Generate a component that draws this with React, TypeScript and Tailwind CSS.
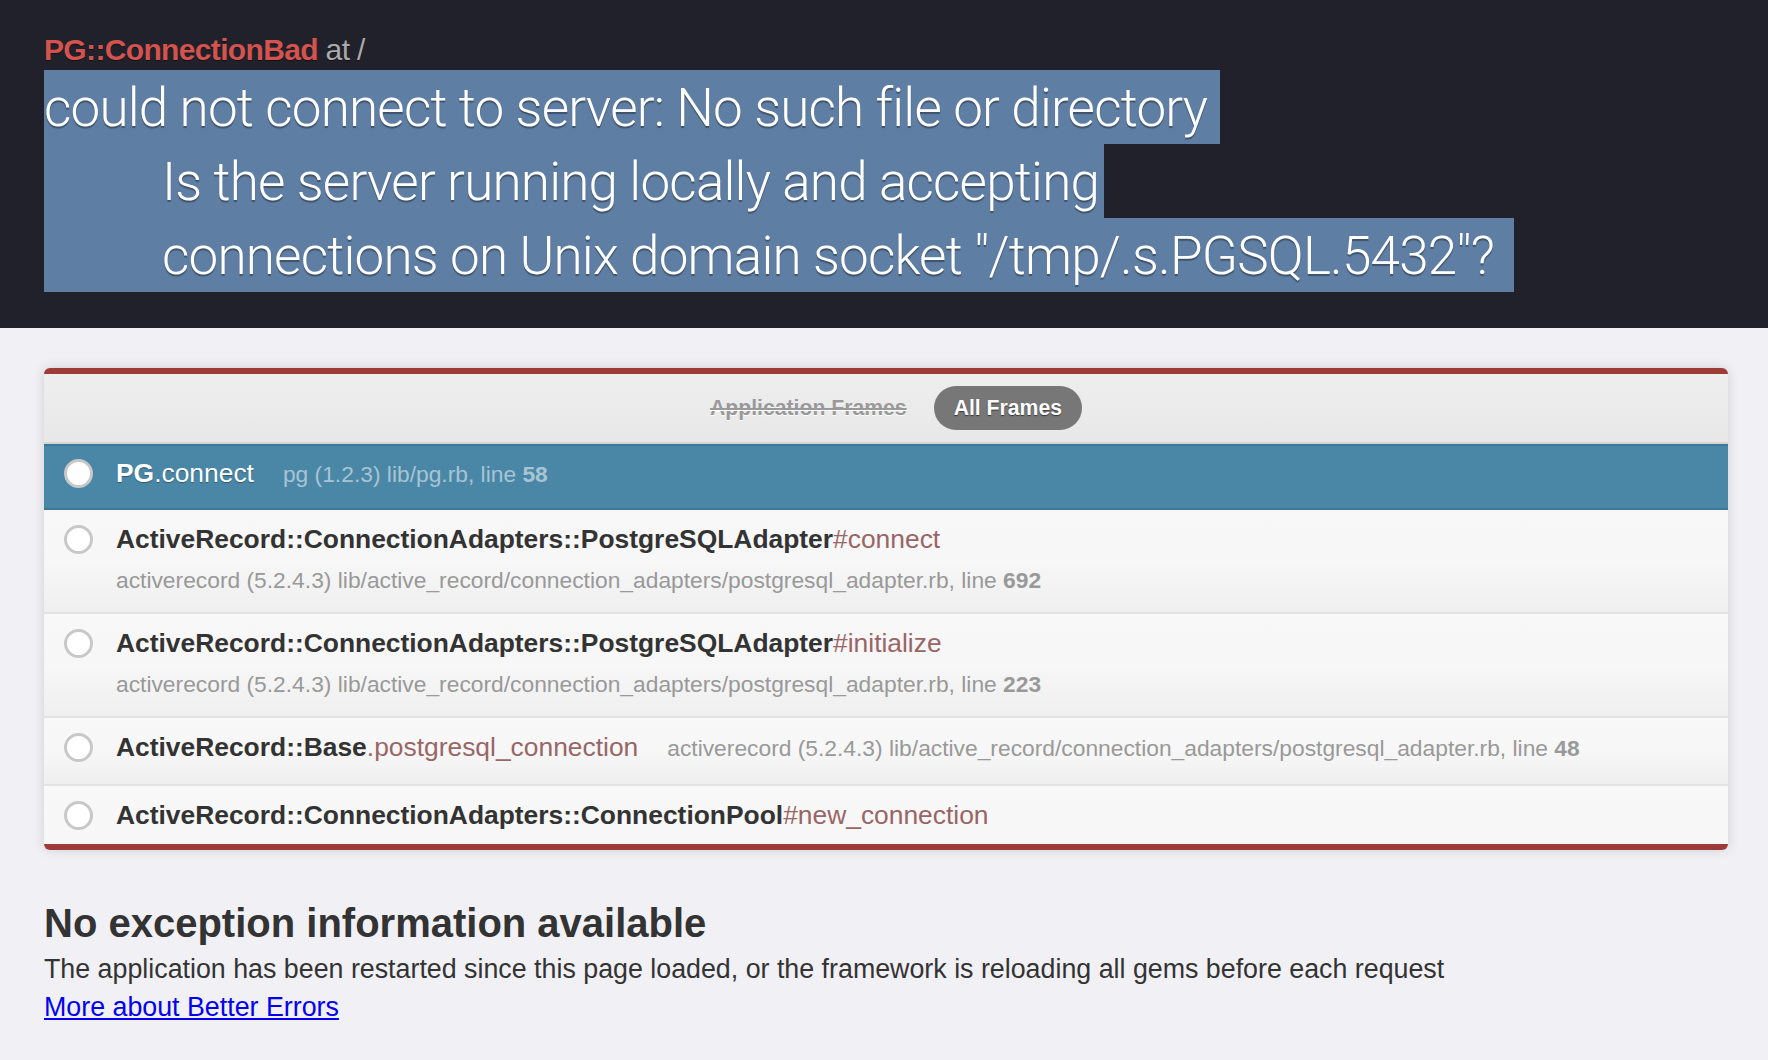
import React from "react";

// ─── Data ─────────────────────────────────────────────────

type Frame = {
  cls: string;
  method: string;
  gem: string;
  path: string;
  line: number;
  inline?: boolean;
  selected?: boolean;
  clipped?: boolean;
  height: string;
};

const frames: Frame[] = [
  {
    cls: "PG",
    method: ".connect",
    gem: "pg (1.2.3)",
    path: "lib/pg.rb",
    line: 58,
    inline: true,
    selected: true,
    height: "h-[66px]",
  },
  {
    cls: "ActiveRecord::ConnectionAdapters::PostgreSQLAdapter",
    method: "#connect",
    gem: "activerecord (5.2.4.3)",
    path: "lib/active_record/connection_adapters/postgresql_adapter.rb",
    line: 692,
    height: "h-[104px]",
  },
  {
    cls: "ActiveRecord::ConnectionAdapters::PostgreSQLAdapter",
    method: "#initialize",
    gem: "activerecord (5.2.4.3)",
    path: "lib/active_record/connection_adapters/postgresql_adapter.rb",
    line: 223,
    height: "h-[104px]",
  },
  {
    cls: "ActiveRecord::Base",
    method: ".postgresql_connection",
    gem: "activerecord (5.2.4.3)",
    path: "lib/active_record/connection_adapters/postgresql_adapter.rb",
    line: 48,
    inline: true,
    height: "h-[68px]",
  },
  {
    // list is scrolled here, the location line sits below the fold
    cls: "ActiveRecord::ConnectionAdapters::ConnectionPool",
    method: "#new_connection",
    gem: "activerecord (5.2.4.3)",
    path: "lib/active_record/connection_adapters/abstract/connection_pool.rb",
    line: 811,
    clipped: true,
    height: "h-[104px]",
  },
];

const messageLines = [
  { text: "could not connect to server: No such file or directory", indent: "pl-0", width: "w-[1176px]" },
  { text: "Is the server running locally and accepting", indent: "pl-[118px]", width: "w-[1060px]" },
  { text: 'connections on Unix domain socket "/tmp/.s.PGSQL.5432"?', indent: "pl-[118px]", width: "w-[1470px]" },
];

// ─── Pieces ───────────────────────────────────────────────

function Location({ frame }: { frame: Frame }) {
  return (
    <span
      className={`whitespace-nowrap text-[22.8px] leading-[30px] ${
        frame.selected ? "text-[#a6c4d4]" : "text-[#999]"
      }`}
    >
      {frame.gem} {frame.path}, line <span className="font-bold">{frame.line}</span>
    </span>
  );
}

function FrameRow({ frame }: { frame: Frame }) {
  const rowClass = frame.selected
    ? "bg-[#4a87a6] border-y-2 border-[#3f7897] pt-[9px]"
    : "bg-linear-to-b from-[#f8f8f8] via-[#f7f7f7] to-[#efefef] border-b-2 border-[#e2e2e2] pt-[11px]";

  return (
    <li className={`${rowClass} ${frame.height} shrink-0`}>
      <div className="flex h-[36px] items-center">
        <span className="ml-[20px] mr-[23px] size-[29px] shrink-0 rounded-full border-[3px] border-[#c8c8c8] bg-white" />
        <span
          className={`whitespace-nowrap text-[26.4px] leading-[36px] ${
            frame.selected
              ? "text-white [text-shadow:0_1px_1px_rgba(0,0,0,0.35)]"
              : "text-[#333]"
          }`}
        >
          <span className="font-bold">{frame.cls}</span>
          <span className={frame.selected ? "text-white" : "text-[#966]"}>
            {frame.method}
          </span>
        </span>
        {frame.inline && (
          <span className="ml-[29px] pt-[2px]">
            <Location frame={frame} />
          </span>
        )}
      </div>
      {!frame.inline && !frame.clipped && (
        <div className="mt-[8px] pl-[72px] leading-[30px]">
          <Location frame={frame} />
        </div>
      )}
    </li>
  );
}

// ─── Page ─────────────────────────────────────────────────

export default function App() {
  return (
    <div className="min-h-[1060px] bg-[#f0f0f5] font-['Liberation_Sans',Arial,sans-serif]">
      {/* Exception header */}
      <header className="h-[328px] bg-[#20212a] pl-[44px] pt-[32px]">
        <h2 className="h-[36px] text-[30px] leading-[36px] tracking-[-0.65px] [text-shadow:0_1px_0_rgba(0,0,0,0.5)]">
          <span className="font-bold text-[#d3534f]">PG::ConnectionBad</span>
          <span className="text-[#aaa]"> at /</span>
        </h2>
        <div className="mt-[2px]">
          {messageLines.map((l) => (
            <div key={l.text} className="h-[74px]">
              <span
                className={`inline-block h-[74px] ${l.width} ${l.indent} whitespace-nowrap bg-[#5f7ea3] pt-[2px] font-['Roboto','Liberation_Sans',sans-serif] text-[53px] font-light leading-[72px] tracking-[-0.8px] text-white [text-shadow:0_2px_1px_rgba(0,0,0,0.35)]`}
              >
                {l.text}
              </span>
            </div>
          ))}
        </div>
      </header>

      {/* Backtrace panel */}
      <div className="pl-[44px] pt-[40px]">
        <div className="w-[1684px] overflow-hidden rounded-[6px] border-y-[6px] border-[#9d3b39] shadow-[0_0_12px_rgba(0,0,0,0.14)]">
          <nav className="flex h-[70px] items-center justify-center gap-[7px] border-b-2 border-[#d6d6d6] bg-linear-to-b from-[#eeeeee] to-[#e8e8e8]">
            <span className="flex h-[44px] items-center px-[20px] text-[21.2px] font-bold text-[#999] line-through [text-shadow:0_1px_0_#fff]">
              Application Frames
            </span>
            <span className="flex h-[44px] items-center rounded-full bg-[#777] px-[20px] text-[21.2px] font-bold text-white [text-shadow:0_1px_1px_rgba(0,0,0,0.55)]">
              All Frames
            </span>
          </nav>
          <ul className="flex h-[400px] flex-col overflow-hidden">
            {frames.map((f) => (
              <FrameRow key={f.cls + f.method} frame={f} />
            ))}
          </ul>
        </div>
      </div>

      {/* No exception info */}
      <section className="pl-[44px] pt-[51px] text-[#333]">
        <h2 className="text-[40px] font-bold leading-[44px]">
          No exception information available
        </h2>
        <p className="mt-[9px] text-[26.8px] leading-[30px]">
          The application has been restarted since this page loaded, or the
          framework is reloading all gems before each request
        </p>
        <p className="mt-[8px] text-[26.8px] leading-[30px]">
          <a href="#" className="text-[#0000ee] underline">
            More about Better Errors
          </a>
        </p>
      </section>
    </div>
  );
}
